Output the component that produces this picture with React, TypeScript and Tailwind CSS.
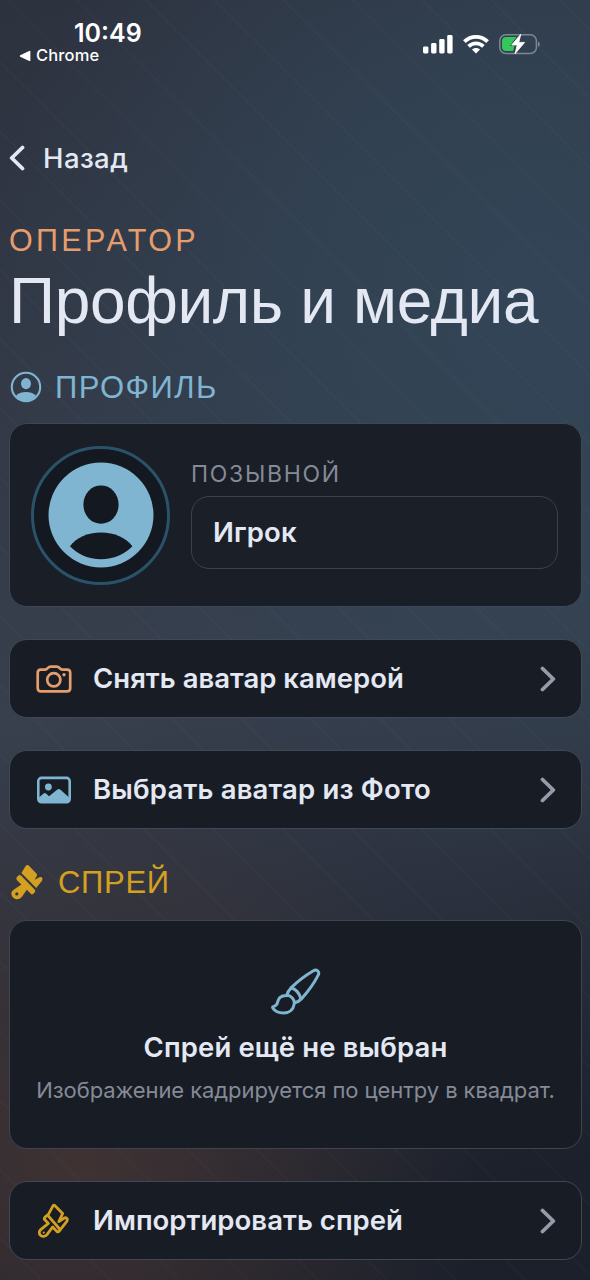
import React from "react";

const HEADING = "font-['Liberation_Sans',Arial,sans-serif]";

interface IconProps {
  className?: string;
}

function ChevronIcon({ className }: IconProps) {
  return (
    <svg viewBox="0 0 16 26" className={className} fill="none" stroke="currentColor" strokeWidth="3.8" strokeLinecap="round" strokeLinejoin="round">
      <path d="M2.5 2.5L13.3 13L2.5 23.5" />
    </svg>
  );
}

function SignalIcon() {
  return (
    <svg viewBox="0 0 30 20" className="w-[30px] h-5" fill="#fff">
      <rect x="0" y="12.4" width="5.4" height="7" rx="1.4" />
      <rect x="8.1" y="9" width="5.4" height="10.4" rx="1.4" />
      <rect x="16.2" y="5" width="5.4" height="14.4" rx="1.4" />
      <rect x="24.2" y="1" width="5.4" height="18.4" rx="1.4" />
    </svg>
  );
}

function WifiIcon() {
  return (
    <svg viewBox="0 0 26 20" className="w-[26px] h-5" fill="none" stroke="#fff" strokeWidth="3.8">
      <path d="M1.4 7.6C7.9 1.2 18.1 1.2 24.6 7.6" />
      <path d="M5.6 12.4C9.9 8.4 16.1 8.4 20.4 12.4" />
      <path d="M9 15.6C11.3 13.6 14.7 13.6 17 15.6L13 19.6Z" fill="#fff" stroke="none" />
    </svg>
  );
}

function BatteryIcon() {
  return (
    <svg viewBox="0 0 42 22" className="w-[42px] h-[22px]">
      <rect x="0.8" y="1.8" width="36.6" height="18.6" rx="6" fill="none" stroke="#7d8793" strokeWidth="1.5" />
      <path d="M39 8.4C41.4 9 41.4 13.2 39 13.8Z" fill="#7d8793" />
      <path d="M7.2 4H17.6L10.8 12.8H15.6L14.2 18H7.2Q3 18 3 14V8Q3 4 7.2 4Z" fill="#34c759" />
      <path d="M21.8 1.2L12.6 12H18.2L16 20.8L25.6 9.4H19.8Z" fill="#fff" stroke="#fff" strokeWidth="0.8" strokeLinejoin="round" />
    </svg>
  );
}

function PersonCircleIcon({ className }: IconProps) {
  return (
    <svg viewBox="0 0 32 32" className={className} fill="currentColor">
      <circle cx="16" cy="16" r="14.2" fill="none" stroke="currentColor" strokeWidth="2.1" />
      <ellipse cx="16" cy="12.6" rx="5" ry="5.6" />
      <path d="M5.8 25.2C7.8 22.2 11.6 20.9 16 20.9C20.4 20.9 24.2 22.2 26.2 25.2C23.6 28.4 20 30 16 30C12 30 8.4 28.4 5.8 25.2Z" />
    </svg>
  );
}

function AvatarIcon() {
  return (
    <svg viewBox="0 0 106 106" className="w-[106px] h-[106px]">
      <circle cx="53" cy="53" r="52.5" fill="#7fb5d1" />
      <ellipse cx="53" cy="42.6" rx="17.6" ry="19.2" fill="#131821" />
      <path d="M22 84.2C28 75.6 39.6 70.4 53 70.4C66.4 70.4 78 75.6 84.4 84.2C77 91.8 65.6 97.3 53 97.3C40.4 97.3 29.2 91.8 22 84.2Z" fill="#131821" />
    </svg>
  );
}

function CameraIcon() {
  return (
    <svg viewBox="0 0 36 28" className="w-9 h-7 text-[#e69d6c]" fill="none" stroke="currentColor" strokeWidth="2.7" strokeLinejoin="round">
      <path d="M4.8 4.6H9.2C10.6 4.6 11 3.9 11.8 3C12.6 2 13.4 1.6 14.8 1.6H20.6C22 1.6 22.8 2 23.6 3C24.4 3.9 24.8 4.6 26.2 4.6H31.2C33.2 4.6 34.2 5.8 34.2 7.8V23.2C34.2 25.2 33.2 26.3 31.2 26.3H4.8C2.8 26.3 1.7 25.2 1.7 23.2V7.8C1.7 5.8 2.8 4.6 4.8 4.6Z" />
      <circle cx="17.8" cy="14.8" r="6.6" />
      <circle cx="28" cy="9.8" r="1.7" fill="currentColor" stroke="none" />
    </svg>
  );
}

function PhotoIcon() {
  return (
    <svg viewBox="0 0 34 28" className="w-[34px] h-7 text-[#7fb5d1]" fill="currentColor">
      <rect x="1.3" y="1.9" width="31.4" height="24.4" rx="3.2" fill="none" stroke="currentColor" strokeWidth="2.6" />
      <circle cx="11.4" cy="11" r="3.4" />
      <path d="M2 21.6L6.6 17.6Q7.8 16.6 9 17.4L12 20.2L20.4 13.6Q21.8 12.6 23.2 13.6L32.4 21.8V24Q32 26 30 26.2H4Q2.2 26 2 24Z" />
    </svg>
  );
}

// flat brush, handle pointing down-left
function SprayBrushIcon({ className }: IconProps) {
  return (
    <svg viewBox="0 0 32 36" className={className} fill="currentColor">
      <path d="M14.8 1.8Q16 .4 17.4 1.2L25.4 9.4Q26.4 10.4 26 11.4L23.6 15.8L29 13Q30.8 12.6 31.4 14.2Q31.6 15.6 31 16.8L25.2 24L10.4 9Z" />
      <path fillRule="evenodd" d="M7.4 11.4Q8.8 10.4 10 11.4L23.6 25.6Q24.8 27 23.8 28.2L22.4 29.8Q21 31 19.8 29.8L15.8 25.8L10.8 33Q7.6 36.4 3.8 34.8Q0 32.8 0.4 28.8Q0.8 27 3 25.6L10.4 20.6L6 16.2Q4.8 14.6 5.8 13.2ZM5.8 28.3A1.6 1.6 0 1 0 5.8 31.5A1.6 1.6 0 1 0 5.8 28.3Z" />
    </svg>
  );
}

function SprayBrushOutlineIcon() {
  return (
    <svg viewBox="0 0 31 35" className="w-[31px] h-[35px] text-[#d3a021]" fill="none" stroke="currentColor" strokeWidth="2.8" strokeLinecap="round" strokeLinejoin="round">
      <path d="M15 2.8Q16 1.8 17 2.8L24.6 10.6L20.8 18.6L26.8 14.8Q28.2 14.2 29.2 15.8Q29.6 17.4 28.6 18.6L21.2 28.2Q20 29.4 18.8 28.4L14.6 24L9 31.6C5.4 36 -1.4 31.4 2.4 26.8L10.4 20.4L6.6 16.6Q5.8 15.4 7 14.2L10.4 11.4Z" />
      <path d="M9.8 12.4L21.6 26" />
      <circle cx="5.8" cy="29.6" r="1.1" fill="currentColor" stroke="none" />
    </svg>
  );
}

function ArtBrushIcon() {
  return (
    <svg viewBox="0 0 50 47" className="w-[50px] h-[47px] text-[#7fb5d1]" fill="none" stroke="currentColor" strokeWidth="3" strokeLinecap="round" strokeLinejoin="round">
      <path d="M15.6 27.6C16.4 24.2 18 22 20.6 19.4C26.4 13.6 34.4 7.6 42.4 2.8C45.4 .8 49 3.6 47.2 7.2C42.8 15.8 36.8 24 30.6 30.6C28.6 32.8 26.6 34.2 23.6 34.8" />
      <path d="M20 20C24.6 20.8 28.8 25.2 29.8 31" />
      <path d="M15.2 27.4C19.6 27 24 31.2 23.2 36C22.4 41.6 18.2 45 12.6 45C8 45 3.6 43 1.8 40C1.4 39 1.8 38.6 2.8 38.4C5.8 37.8 6.4 36 6.8 33.6C7.4 30 10.6 27.6 15.2 27.4Z" />
    </svg>
  );
}

interface ActionRowProps {
  icon: React.ReactNode;
  label: string;
  className?: string;
  labelClassName?: string;
}

function ActionRow({ icon, label, className = "", labelClassName = "" }: ActionRowProps) {
  return (
    <button className={`w-full h-[79px] flex items-center rounded-[18px] border border-[#414855] bg-[#181c25] pl-6 pr-[25px] text-left ${className}`}>
      <span className="w-[39px] flex justify-center">{icon}</span>
      <span className={`flex-1 ml-5 pt-px text-[27.5px] font-semibold text-[#e3e8f3] ${labelClassName}`}>{label}</span>
      <ChevronIcon className="w-4 h-[26px] text-[#959ba8]" />
    </button>
  );
}

export default function App() {
  return (
    <div className="relative w-[590px] h-[1280px] overflow-hidden font-[Inter,'Noto_Sans',sans-serif] text-[#e3e8f3] bg-[radial-gradient(circle_at_92%_24%,rgba(50,69,87,0.95)_0px,rgba(50,69,87,0.75)_230px,rgba(50,69,87,0)_560px),radial-gradient(circle_at_14%_91%,rgba(68,52,51,0.85)_0px,rgba(68,52,51,0)_400px),linear-gradient(168deg,#2d323f_0%,#383f4d_52%,#1b202b_92%)]">
      {/* thin diagonal hatching */}
      <div className="absolute inset-0 bg-[repeating-linear-gradient(45deg,transparent_0px,transparent_28.3px,rgba(255,255,255,0.018)_28.8px,rgba(255,255,255,0.018)_29.8px,transparent_30.3px,transparent_48.93px)]" />

      <div className="relative">
        <header className="h-[140px] flex justify-between pl-[19px] pr-[49px]">
          <div className="pt-5">
            <div className="pl-[55px] text-[25px] leading-[26px] font-semibold text-white">10:49</div>
            <div className="flex items-center gap-[5px] text-[16.5px] leading-[19px] font-medium text-white">
              <svg viewBox="0 0 12 12" className="w-3 h-3" fill="#fff">
                <path d="M1.2 5.2L10.2 .9Q11.4 .6 11.4 1.8V10.2Q11.4 11.4 10.2 11L1.2 6.8Q.2 6 1.2 5.2Z" />
              </svg>
              <span className="tracking-[0.15px]">Chrome</span>
            </div>
          </div>
          <div className="flex items-center gap-[10px] h-[88px]">
            <SignalIcon />
            <WifiIcon />
            <BatteryIcon />
          </div>
        </header>

        <main className="pl-[9px] pr-2">
          <button className="flex items-center gap-[18px] h-9 text-[27.5px] font-medium tracking-[0.4px]">
            <ChevronIcon className="w-4 h-[26px] rotate-180" />
            <span className="pt-px">Назад</span>
          </button>

          <div className={`${HEADING} mt-[46px] h-9 leading-[37px] text-[30.5px] tracking-[3.3px] text-[#e69d6c]`}>ОПЕРАТОР</div>
          <h1 className={`${HEADING} h-[84px] leading-[87px] text-[64px] tracking-[-0.35px] whitespace-nowrap`}>Профиль и медиа</h1>

          <h2 className={`${HEADING} mt-[27px] h-9 flex items-center gap-[13px] pl-px text-[31px] tracking-[1.4px] text-[#7fb5d1]`}>
            <PersonCircleIcon className="w-8 h-8" />
            <span className="pt-0.5">ПРОФИЛЬ</span>
          </h2>

          <section className="mt-[18px] h-[184px] flex items-center rounded-[18px] border border-[#3d4856] bg-[#191e27] pl-[21px] pr-[23px]">
            <div className="w-[139px] h-[139px] shrink-0 flex items-center justify-center rounded-full border-[3px] border-[#2a5268] bg-[#131821]">
              <AvatarIcon />
            </div>
            <div className="ml-[21px] mb-[5px] flex-1">
              <div className="h-9 leading-9 text-[23px] tracking-[1.7px] text-[#858a97]">ПОЗЫВНОЙ</div>
              <div className="mt-[4px] h-[73px] flex items-center rounded-[18px] border border-[#3c414d] bg-[#1a1f28] px-[21px] text-[27.5px] font-semibold tracking-[0.15px]">Игрок</div>
            </div>
          </section>

          <ActionRow className="mt-8" icon={<CameraIcon />} label="Снять аватар камерой" labelClassName="tracking-[0.02px]" />
          <ActionRow className="mt-8" icon={<PhotoIcon />} label="Выбрать аватар из Фото" labelClassName="tracking-[0.18px]" />

          <h2 className={`${HEADING} mt-[35px] h-9 flex items-center gap-[15px] pl-[2px] text-[31px] tracking-[0.7px] text-[#d3a021]`}>
            <SprayBrushIcon className="w-8 h-9" />
            <span className="pt-0.5">СПРЕЙ</span>
          </h2>

          <section className="mt-5 h-[229px] flex flex-col items-center rounded-[18px] border border-[#3f4450] bg-[#181c25] pt-[47px]">
            <ArtBrushIcon />
            <div className="mt-[14px] h-9 leading-9 text-[27.5px] font-semibold tracking-[0.15px] whitespace-nowrap">Спрей ещё не выбран</div>
            <div className="mt-[11px] h-7 leading-7 text-[22px] tracking-[-0.08px] whitespace-nowrap text-[#858a97]">Изображение кадрируется по центру в квадрат.</div>
          </section>

          <ActionRow className="mt-8" icon={<SprayBrushOutlineIcon />} label="Импортировать спрей" labelClassName="tracking-[0.04px]" />
        </main>
      </div>
    </div>
  );
}
